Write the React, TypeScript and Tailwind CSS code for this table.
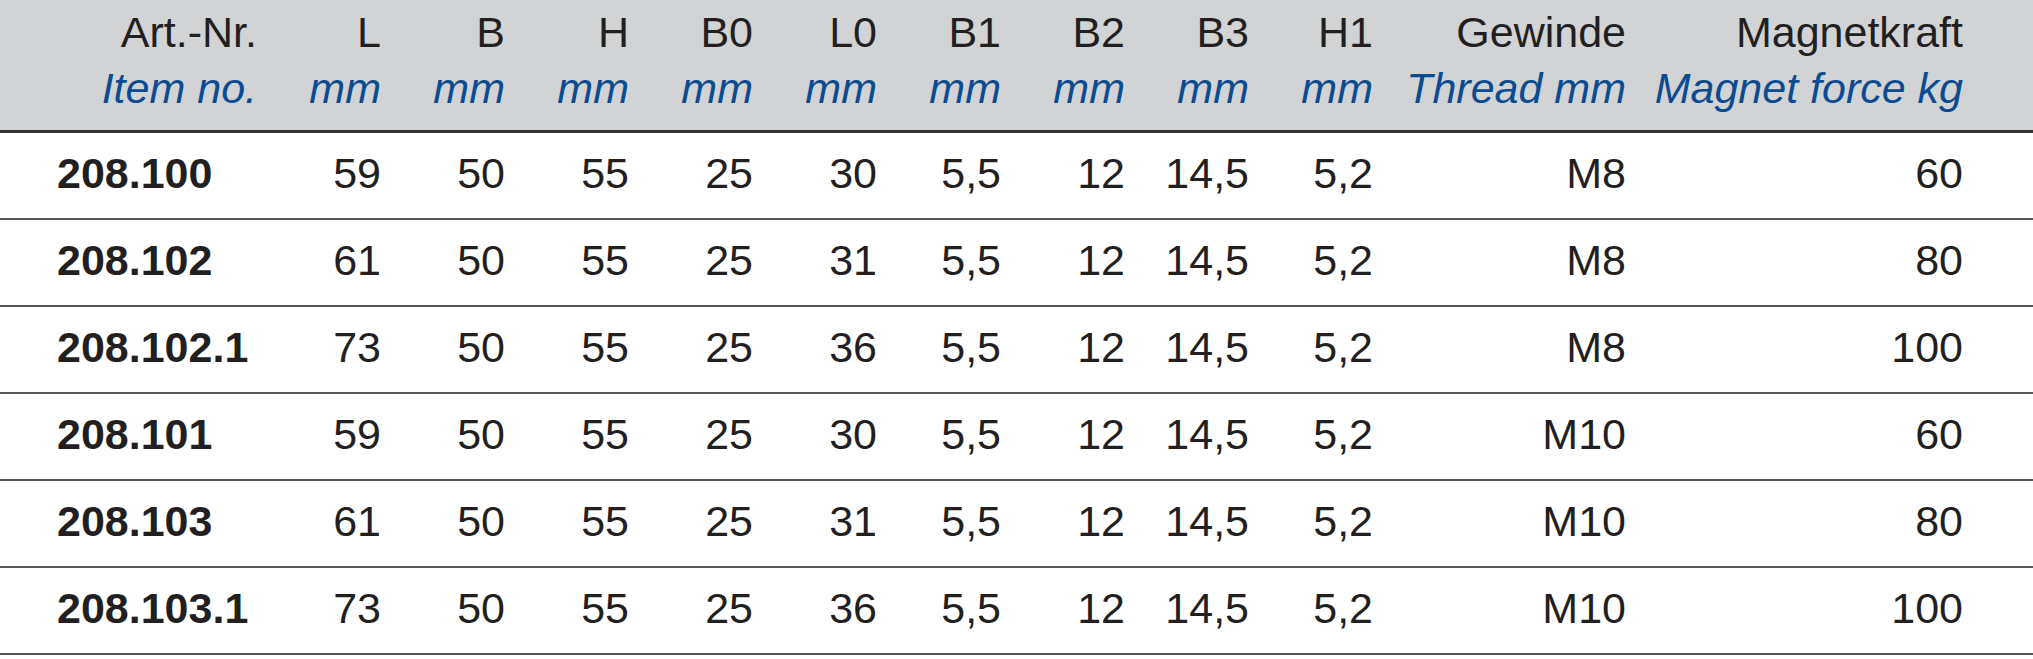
import React from 'react';

type Row = {
  art: string;
  values: string[];
  thread: string;
  force: string;
};

const dims = ['L', 'B', 'H', 'B0', 'L0', 'B1', 'B2', 'B3', 'H1'];

const rows: Row[] = [
  { art: '208.100', values: ['59', '50', '55', '25', '30', '5,5', '12', '14,5', '5,2'], thread: 'M8', force: '60' },
  { art: '208.102', values: ['61', '50', '55', '25', '31', '5,5', '12', '14,5', '5,2'], thread: 'M8', force: '80' },
  { art: '208.102.1', values: ['73', '50', '55', '25', '36', '5,5', '12', '14,5', '5,2'], thread: 'M8', force: '100' },
  { art: '208.101', values: ['59', '50', '55', '25', '30', '5,5', '12', '14,5', '5,2'], thread: 'M10', force: '60' },
  { art: '208.103', values: ['61', '50', '55', '25', '31', '5,5', '12', '14,5', '5,2'], thread: 'M10', force: '80' },
  { art: '208.103.1', values: ['73', '50', '55', '25', '36', '5,5', '12', '14,5', '5,2'], thread: 'M10', force: '100' },
];

const grid = 'grid grid-cols-[257px_repeat(9,124px)_253px_337px]';

const HeaderCell = ({ de, en }: { de: string; en: string }) => (
  <div className="flex flex-col items-end whitespace-nowrap">
    <span className="text-[#231f20]">{de}</span>
    <span className="italic text-[#0a4b91]">{en}</span>
  </div>
);

export default function App() {
  return (
    <div
      className="w-[2033px] h-[659px] bg-white text-[43px] text-[#231f20] overflow-hidden"
      style={{ fontFamily: '"Liberation Sans", Arial, sans-serif' }}
    >
      <div className={`${grid} bg-[#d1d3d4] h-[133px] pt-[4px] leading-[56px] border-b-[3px] border-[#333333]`}>
        <HeaderCell de="Art.-Nr." en="Item no." />
        {dims.map((d) => (
          <HeaderCell key={d} de={d} en="mm" />
        ))}
        <HeaderCell de="Gewinde" en="Thread mm" />
        <HeaderCell de="Magnetkraft" en="Magnet force kg" />
      </div>
      {rows.map((r) => (
        <div key={r.art} className={`${grid} h-[87px] pt-[19px] leading-[43px] border-b-2 border-[#555555]`}>
          <div className="pl-[57px] font-bold whitespace-nowrap">{r.art}</div>
          {r.values.map((v, i) => (
            <div key={i} className="text-right">{v}</div>
          ))}
          <div className="text-right">{r.thread}</div>
          <div className="text-right">{r.force}</div>
        </div>
      ))}
    </div>
  );
}
